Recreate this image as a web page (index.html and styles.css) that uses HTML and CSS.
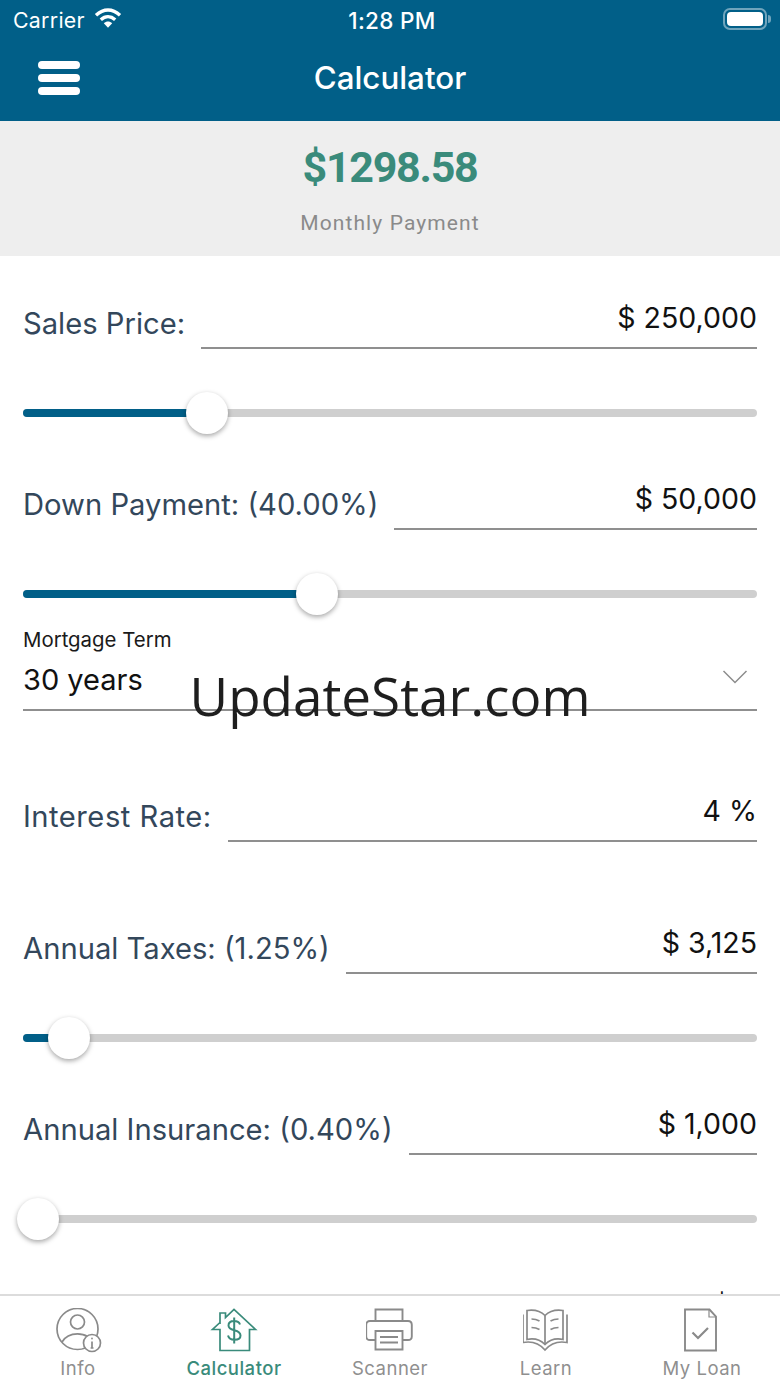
FILE: index.html
```html
<!DOCTYPE html>
<html lang="en">
<head>
<meta charset="utf-8">
<title>Calculator</title>
<link rel="stylesheet" href="styles.css">
</head>
<body>
<div class="app">
  <header class="topbar">
    <div class="status">
      <div class="status-left">
        <span>Carrier</span>
        <svg class="wifi" viewBox="0 0 28 22" width="28" height="22"><path d="M2 8.2C9.500 1.300 18.500 1.300 26 8.200" fill="none" stroke="#fff" stroke-width="3.400"/><path d="M6.800 12.800C11.300 8.800 16.700 8.800 21.200 12.800" fill="none" stroke="#fff" stroke-width="3.400"/><path d="M9.800 16.300C12.500 13.900 15.500 13.900 18.200 16.300L14 20.800Z" fill="#fff"/></svg>
      </div>
      <div class="clock">1:28 PM</div>
      <div class="status-right">
        <span class="battery"><span class="battery-fill"></span></span><span class="battery-tip"></span>
      </div>
    </div>
    <div class="nav">
      <div class="burger"><span></span><span></span><span></span></div>
      <h1>Calculator</h1>
    </div>
  </header>
  <section class="summary">
    <div class="amount">$1298.58</div>
    <div class="amount-label">Monthly Payment</div>
  </section>
  <main class="form">
    <div class="field first">
      <label class="field-label">Sales Price:</label>
      <div class="field-value">$ 250,000</div>
    </div>
    <div class="slider"><div class="fill" style="width:184px"></div><div class="thumb" style="left:163px"></div></div>

    <div class="field">
      <label class="field-label">Down Payment: (40.00%)</label>
      <div class="field-value">$ 50,000</div>
    </div>
    <div class="slider"><div class="fill" style="width:294px"></div><div class="thumb" style="left:273px"></div></div>

    <div class="select">
      <div class="select-label">Mortgage Term</div>
      <div class="select-row">
        <span>30 years</span>
        <svg class="chevron" viewBox="0 0 26 16" width="26" height="16"><path d="M1.500 2L13 13.500L24.500 2" fill="none" stroke="#8c8c8c" stroke-width="1.500"/></svg>
      </div>
    </div>

    <div class="field after-select">
      <label class="field-label wide">Interest Rate:</label>
      <div class="field-value">4 %</div>
    </div>

    <div class="field after-plain">
      <label class="field-label">Annual Taxes: (1.25%)</label>
      <div class="field-value">$ 3,125</div>
    </div>
    <div class="slider"><div class="fill" style="width:46px"></div><div class="thumb" style="left:25px"></div></div>

    <div class="field">
      <label class="field-label">Annual Insurance: (0.40%)</label>
      <div class="field-value">$ 1,000</div>
    </div>
    <div class="slider"><div class="fill" style="width:15px"></div><div class="thumb" style="left:-6px"></div></div>

    <div class="field">
      <div class="field-value">$ 0</div>
    </div>
  </main>
  <nav class="tabs">
    <div class="tab">
      <svg viewBox="0 0 48 46" width="48" height="46" fill="none" stroke="#8a8a8a" stroke-width="1.700"><circle cx="23.500" cy="21" r="20.500"/><circle cx="23.500" cy="14" r="7"/><path d="M8 34C11.500 28 17.500 25.800 23.500 25.800C27.500 25.800 30.500 26.500 33.500 28.500"/><circle cx="38" cy="35" r="8.500" fill="#fff"/><path d="M38 33.500V40M36.600 40H39.500" /><circle cx="38" cy="30.500" r="0.900" fill="#8a8a8a" stroke="none"/></svg>
      <span>Info</span>
    </div>
    <div class="tab active">
      <svg viewBox="0 0 48 46" width="48" height="46" fill="none" stroke="#3a8b7b" stroke-width="1.700"><path d="M10 16V5H15.500V9.500L24 1.500L45.500 21.500H39.500V42.500H10V21.500H2.500L10 14.500"/><path d="M30 16.500C29 13.500 26.500 13 24 13C21 13 18.500 14.300 18.500 17.500C18.500 24 30.500 20.500 30.500 27.500C30.500 30.500 27.500 31.800 24.500 31.800C21.500 31.800 18.800 30.500 18 27.500M24.200 9.500V35.500" stroke-width="2"/></svg>
      <span>Calculator</span>
    </div>
    <div class="tab">
      <svg viewBox="1 0 48 46" width="48" height="46" fill="none" stroke="#8a8a8a" stroke-width="1.900"><path d="M10.500 13V1.500H37.500V13"/><path d="M10 32H5C2.500 32 1.200 30.500 1.200 28.500V17C1.200 14.500 2.500 13 5 13H43C45.500 13 46.800 14.500 46.800 17V28.500C46.800 30.500 45.500 32 43 32H38"/><path d="M10.500 23H37.500V41.500H10.500Z"/><path d="M15 29H33M15 34.500H33"/></svg>
      <span>Scanner</span>
    </div>
    <div class="tab">
      <svg viewBox="2 0 46 44" width="46" height="44" class="book" fill="none" stroke="#8a8a8a" stroke-width="1.700"><path d="M24 36.500C19 31.500 13 30 6 31.500V2.500C13 1.500 19 2.500 24 7.500C29 2.500 35 1.500 42 2.500V31.500C35 30 29 31.500 24 36.500Z"/><path d="M24 7.500V36.500"/><path d="M2 6.500V34.500C10 33 18 35 24 42C30 35 38 33 46 34.500V6.500"/><path d="M10.500 11C13.500 11 16 11.600 18.500 13M10.500 19.500C13.500 19.500 16 20.100 18.500 21.500M37.500 11C34.500 11 32 11.600 29.500 13M37.500 19.500C34.500 19.500 32 20.100 29.500 21.500"/></svg>
      <span>Learn</span>
    </div>
    <div class="tab">
      <svg viewBox="2 0 48 46" width="48" height="46" fill="none" stroke="#8a8a8a" stroke-width="1.900"><path d="M9 1.500H33.500L40 8.500V42.500H9Z"/><path d="M33 2V9H40" stroke-width="1.200"/><path d="M16.500 24.500L22 30L32 20" stroke-width="2.200"/></svg>
      <span>My Loan</span>
    </div>
  </nav>
  <div class="watermark">UpdateStar.com</div>
</div>
</body>
</html>
```
FILE: styles.css
```css
* { box-sizing: border-box; }
html, body { margin: 0; padding: 0; }
body { font-family: Inter, Roboto, "Liberation Sans", sans-serif; background: #fff; }
.app { position: relative; width: 780px; height: 1387px; display: flex; flex-direction: column; overflow: hidden; }

.topbar { background: #015f88; color: #fff; height: 121px; flex: none; }
.status { height: 40px; display: grid; grid-template-columns: 1fr auto 1fr; align-items: center; padding: 0 9px 0 13px; font-size: 21.300px; }
.status-left { display: flex; align-items: center; gap: 9px; letter-spacing: 0.300px; }
.wifi { margin-top: -4px; }
.clock { font-size: 22.500px; font-weight: 500; letter-spacing: 0.300px; }
.status-right { display: flex; justify-content: flex-end; align-items: center; }
.battery { width: 44px; height: 22px; border: 2px solid #6fa4bc; border-radius: 7px; padding: 2px; display: block; margin-top: -2px; }
.battery-fill { display: block; height: 100%; background: #fff; border-radius: 4px; }
.battery-tip { width: 3px; height: 8px; margin-left: 1px; background: #6fa4bc; border-radius: 0 3px 3px 0; margin-top: -2px; }
.nav { position: relative; height: 81px; display: flex; align-items: center; justify-content: center; }
.burger { position: absolute; left: 38px; top: 21px; width: 42px; display: flex; flex-direction: column; gap: 5px; }
.burger span { height: 8px; background: #fff; border-radius: 4px; }
.nav h1 { margin: 0 0 5px; font-size: 31.300px; font-weight: 500; }

.summary { flex: none; height: 135px; background: #eeeeee; text-align: center; padding-top: 18px; }
.amount { font-family: Roboto, sans-serif; font-size: 43px; line-height: 56px; font-weight: 700; color: #3a8b7b; letter-spacing: -1.300px; }
.amount-label { font-family: Roboto, sans-serif; margin-top: 14px; font-size: 21px; line-height: 28px; color: #8a8a8a; letter-spacing: 1.100px; }

.form { flex: 1; min-height: 0; overflow: hidden; padding: 0 23px; }
.field { display: flex; align-items: flex-start; gap: 16px; height: 44px; margin-top: 52px; }
.field.first { margin-top: 49px; }
.field.after-select { margin-top: 87px; }
.field.after-plain { margin-top: 88px; }
.field-label { font-size: 29.200px; line-height: 37px; color: #33475b; white-space: nowrap; }
.field-label.wide { letter-spacing: 0.500px; }
.field-value { flex: 1; height: 44px; border-bottom: 2px solid #8f8f8f; text-align: right; font-size: 28.500px; line-height: 26px; color: #111; }

.slider { position: relative; height: 42px; margin-top: 43px; display: flex; align-items: center; }
.slider::before { content: ""; position: absolute; left: 0; right: 0; top: 17px; height: 8px; border-radius: 4px; background: #cfcfcf; }
.fill { position: relative; height: 8px; border-radius: 4px 0 0 4px; background: #015f88; }
.thumb { position: absolute; top: 0; width: 42px; height: 42px; border-radius: 50%; background: #fff; box-shadow: 0 2px 5px rgba(0,0,0,.35); }

.select { margin-top: 14px; }
.select-label { font-size: 20.400px; line-height: 22px; color: #1a1a1a; }
.select-row { display: flex; justify-content: space-between; align-items: center; height: 60px; border-bottom: 2px solid #8f8f8f; font-size: 29px; color: #111; padding-bottom: 2px; }
.chevron { margin-right: 9px; margin-bottom: 4px; }

.tabs { flex: none; height: 93px; border-top: 2px solid #dcdcdc; background: #fff; display: grid; grid-template-columns: 156px 156px 156px 156px 156px; }
.tab { display: flex; flex-direction: column; align-items: center; padding-top: 12px; font-size: 18.500px; line-height: 26px; color: #8f8f8f; letter-spacing: 0.500px; }
.tab span { margin-top: 1px; }
.tab .book { margin-bottom: 2px; }
.tab.active { color: #3a8b7b; font-weight: 500; }

.watermark { position: absolute; left: 0; right: 0; top: 658px; text-align: center; font-family: "Open Sans", sans-serif; font-size: 53px; line-height: 76px; color: #1e1e1e; }
```
